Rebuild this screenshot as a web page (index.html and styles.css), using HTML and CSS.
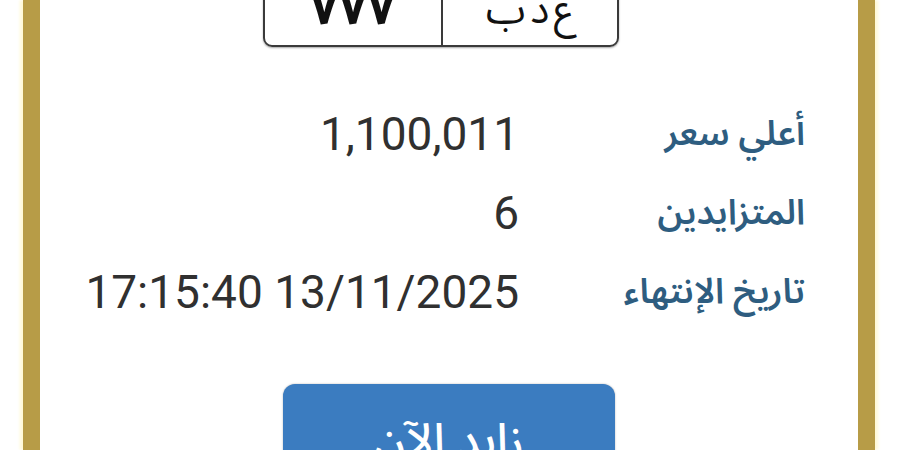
FILE: index.html
```html
<!DOCTYPE html>
<html lang="ar">
<head>
<meta charset="utf-8">
<link rel="stylesheet" href="styles.css">
</head>
<body>
<div class="frame">
  <div class="plate">
    <div class="cell cell-num">٧٧٧</div>
    <div class="cell cell-letters">ع د ب</div>
  </div>
  <div class="info" dir="rtl">
    <div class="label">أعلي سعر</div>
    <div class="value">1,100,011</div>
    <div class="label">المتزايدين</div>
    <div class="value">6</div>
    <div class="label">تاريخ الإنتهاء</div>
    <div class="value" dir="ltr">17:15:40 13/11/2025</div>
  </div>
  <div class="btn-wrap">
    <div class="btn">زايد الآن</div>
  </div>
</div>
</body>
</html>
```
FILE: styles.css
```css
html, body {
  margin: 0;
  padding: 0;
  background: #ffffff;
  width: 900px;
  height: 450px;
  overflow: hidden;
}
.frame {
  margin-left: 23px;
  width: 818px;
  height: 450px;
  border-left: 17px solid #b79c47;
  border-right: 17px solid #b79c47;
  box-shadow: -3px 0 3px #fff9d6, 3px 0 3px #fff9d6;
  background: #fff;
  overflow: hidden;
}
.plate {
  display: flex;
  margin-top: -30px;
  margin-left: 223px;
  width: 352px;
  height: 73px;
  border: 2px solid #3a3a3a;
  border-radius: 9px;
  box-shadow: 0 1px 2px rgba(0,0,0,0.35);
}
.cell {
  display: flex;
  align-items: flex-end;
  justify-content: center;
  color: #111;
  font-family: "Noto Sans Arabic", "DejaVu Sans", sans-serif;
}
.cell-num {
  width: 176px;
  border-right: 2px solid #3a3a3a;
  font-size: 50px;
  font-weight: bold;
  line-height: 1;
  padding-bottom: 12px;
  letter-spacing: 2px;
}
.cell-letters {
  flex: 1;
  font-size: 40px;
  line-height: 1;
  padding-bottom: 14px;
  word-spacing: -6px;
}
.info {
  display: grid;
  grid-template-columns: 286px auto;
  margin-top: 48px;
  padding-right: 53px;
}
.label {
  font-family: "Noto Sans Arabic", "DejaVu Sans", sans-serif;
  font-size: 35px;
  font-weight: 600;
  color: #2e5d80;
  line-height: 79px;
  height: 79px;
}
.value {
  font-family: Roboto, "Liberation Sans", sans-serif;
  font-size: 46px;
  color: #303030;
  line-height: 79px;
  height: 79px;
  text-align: right;
}
.btn-wrap {
  display: flex;
  justify-content: center;
  margin-top: 52px;
}
.btn {
  width: 332px;
  height: 110px;
  background: #3b7cc0;
  border-radius: 12px;
  box-shadow: 0 0 2px rgba(0,0,0,0.3);
  color: #ffffff;
  font-family: "Noto Sans Arabic", "DejaVu Sans", sans-serif;
  font-size: 46px;
  font-weight: 500;
  text-align: center;
  padding-top: 30px;
  box-sizing: border-box;
  line-height: 1.2;
}
```
